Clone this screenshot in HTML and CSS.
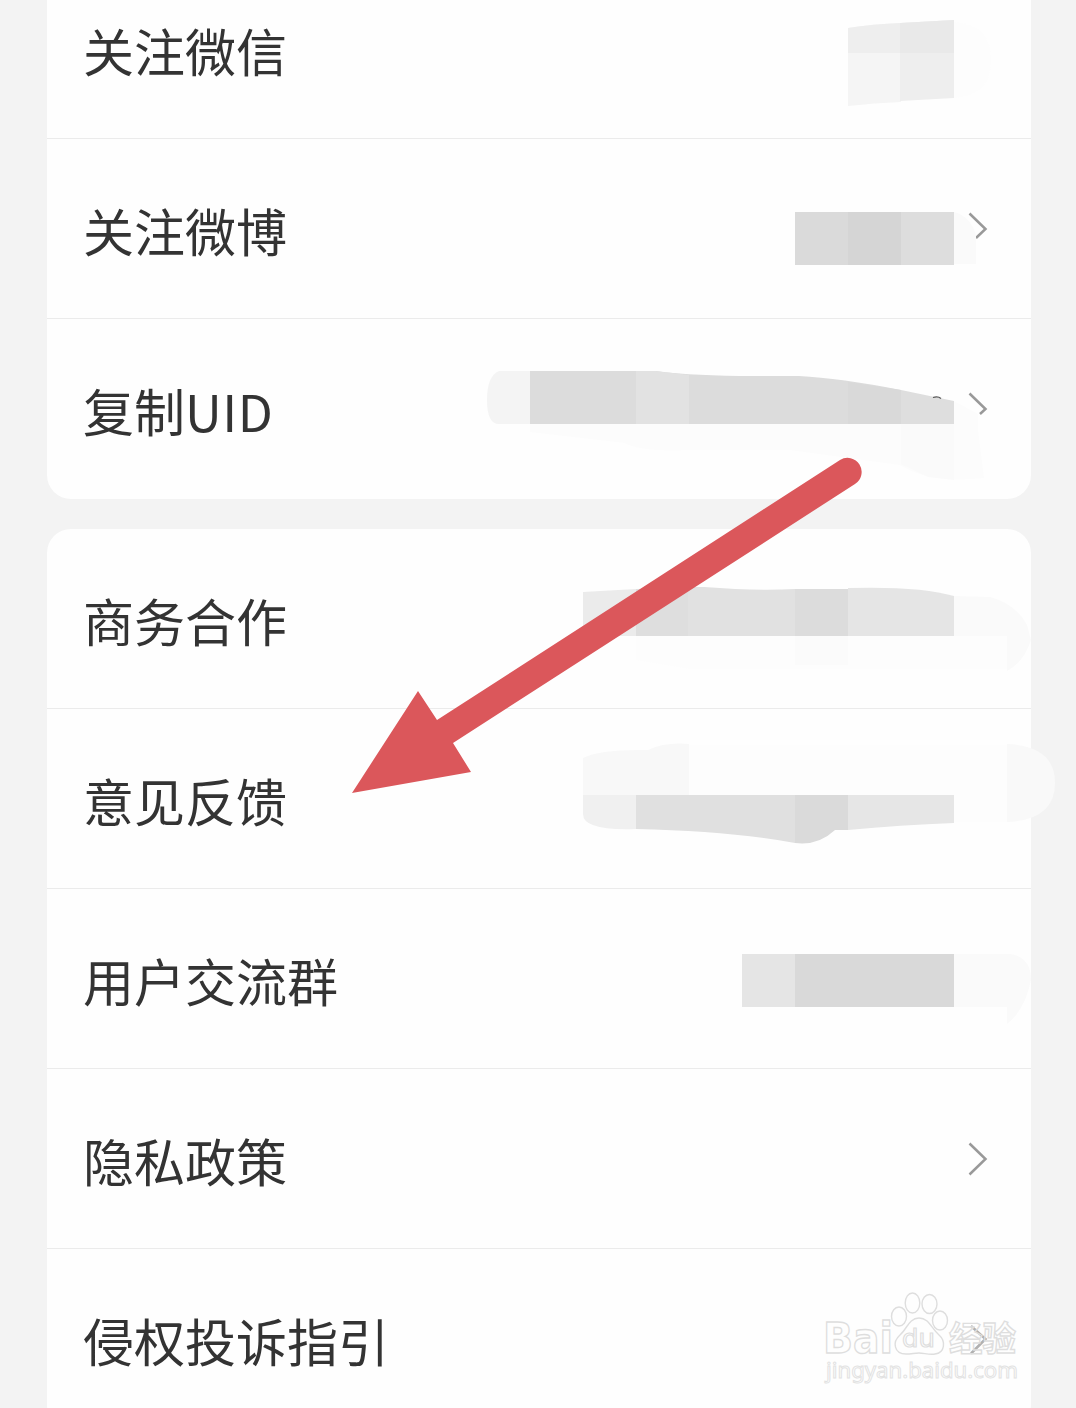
FILE: index.html
```html
<!DOCTYPE html>
<html lang="zh-CN">
<head>
<meta charset="utf-8">
<title>设置</title>
<link rel="stylesheet" href="styles.css">
</head>
<body>
<main class="page">
  <section class="card card-first">
    <div class="row"><span class="label">关注微信</span></div>
    <div class="row"><span class="label">关注微博</span><svg class="chevron" viewBox="0 0 20 34"><path d="M1.500 1.500 17.500 17l-9.500 9"/></svg></div>
    <div class="row"><span class="label">复制<span class="latin">UID</span></span><svg class="chevron" viewBox="0 0 20 34"><path d="M1.500 1.500 17.500 17l-5.500 5"/></svg></div>
  </section>
  <section class="card card-last">
    <div class="row"><span class="label">商务合作</span></div>
    <div class="row"><span class="label">意见反馈</span></div>
    <div class="row"><span class="label">用户交流群</span></div>
    <div class="row"><span class="label">隐私政策</span><svg class="chevron" viewBox="0 0 20 34"><path d="M1.500 1.500 17.500 17 1.500 32.500"/></svg></div>
    <div class="row"><span class="label">侵权投诉指引</span><svg class="chevron chevron-faded" viewBox="0 0 20 34"><path d="M3 4 17.500 17 3 31.500"/></svg></div>
  </section>
</main>
<svg class="overlay" viewBox="0 0 1076 1408">
  <!-- row 1 mask -->
  <path fill="#f5f5f5" d="M848 28Q873 24 901 23V102Q875 103 848 106z"/>
  <path fill="#eeeeee" d="M848 28Q873 24 901 23V53H848z"/>
  <path fill="#eeeeee" d="M900 23 954 20V98L900 101z"/>
  <path fill="#e9e9e9" d="M900 23 954 20V53H900z"/>
  <path fill="#fdfdfd" d="M954 22Q991 25 991 60T954 98z"/>
  <!-- row 2 mask -->
  <path fill="#fafafa" d="M954 212Q970 216 976 235V264H954z"/>
  <path fill="#dadada" d="M795 212H848V265H795z"/>
  <path fill="#d5d5d5" d="M848 212H901V265H848z"/>
  <path fill="#dddddd" d="M901 212H954V265H901z"/>
  <!-- row 3 mask -->
  <path fill="#fcfcfc" d="M530 424H954V401L978 414V430L984 478Q930 484 900 465L790 450H690Q640 452 625 443L530 432z"/>
  <path fill="#fafafa" d="M901 424H954V480L928 477 901 464z"/>
  <path fill="#f4f4f4" d="M530 371H499Q487 376 487 400T499 424H530z"/>
  <path fill="#dcdcdc" d="M530 371H656Q680 375 740 376L799 376Q840 378 901 390V424H530z"/>
  <path fill="#e2e2e2" d="M636 371H656L689 375V424H636z"/>
  <path fill="#d9d9d9" d="M848 382 901 390V424H848z"/>
  <path fill="#dedede" d="M901 390 954 401V424H901z"/>
  <path fill="none" stroke="#555" stroke-width="1.2" d="M933 397.500Q938 396 941 398.500"/>
  <!-- row 4 mask -->
  <path fill="#fdfdfd" d="M636 636H1007V669H690L636 660z"/>
  <path fill="#fbfbfb" d="M795 636H848V665H795z"/>
  <path fill="#fafafa" d="M954 596 990 597Q1016 604 1027 625L1031 640Q1024 662 1007 671V636H954z"/>
  <path fill="#ebebeb" d="M583 592 636 589V636H583z"/>
  <path fill="#dedede" d="M636 589 701 587V636H636z"/>
  <path fill="#e1e1e1" d="M688 587H704Q755 591 795 589V636H688z"/>
  <path fill="#dcdcdc" d="M795 589H848V636H795z"/>
  <path fill="#e5e5e5" d="M848 588Q920 586 954 596V636H848z"/>
  <!-- row 5 mask -->
  <path fill="#fdfdfd" d="M689 745H1007V822H954V795H689z"/>
  <path fill="#f8f8f8" d="M583 758Q600 749 648 750 665 742 689 744V795H583z"/>
  <path fill="#f9f9f9" d="M1007 744Q1055 746 1055 783T1007 822z"/>
  <path fill="#f0f0f0" d="M583 795H636V829Q583 831 583 814z"/>
  <path fill="#e0e0e0" d="M636 795H795V843Q730 831 636 829z"/>
  <path fill="#dadada" d="M795 795H848V830H835Q818 846 795 843z"/>
  <path fill="#e6e6e6" d="M848 795H954V823Q900 825 848 830z"/>
  <!-- row 6 mask -->
  <path fill="#fafafa" d="M954 954H1010Q1031 957 1031 980 1025 1010 1007 1024V1007H954z"/>
  <path fill="#e5e5e5" d="M742 954H795V1007H742z"/>
  <path fill="#d9d9d9" d="M795 954H954V1007H795z"/>
  <!-- pointer arrow -->
  <path class="arrow" d="M352 793 418 691 437 720 840 460A14 14 0 0 1 855 484L453 743 471 772z"/>
  <!-- watermark -->
  <g class="mark">
    <text class="mark-bold" x="823" y="1353" font-size="43" textLength="70" lengthAdjust="spacingAndGlyphs">Bai</text>
    <ellipse cx="899" cy="1316.500" rx="7.500" ry="9.500"/>
    <ellipse cx="912.500" cy="1303" rx="7.300" ry="10"/>
    <ellipse cx="929.500" cy="1304" rx="7.500" ry="9.500"/>
    <ellipse cx="940" cy="1320.500" rx="7.500" ry="9.500"/>
    <path d="M919 1318C909 1318 907 1329 900 1335 892 1342 894 1354 906 1354 912 1354 914 1353 919 1353S929 1355 935 1354C945 1353 946 1341 939 1335 931 1328 929 1318 919 1318z"/>
    <text class="mark-du" x="902" y="1347" font-size="25" textLength="33" lengthAdjust="spacingAndGlyphs">du</text>
    <text class="mark-cjk" x="949" y="1351" font-size="34" textLength="67" lengthAdjust="spacingAndGlyphs">经验</text>
    <text class="mark-url" x="826" y="1378" font-size="22" textLength="192" lengthAdjust="spacingAndGlyphs">jingyan.baidu.com</text>
  </g>
</svg>
</body>
</html>
```
FILE: styles.css
```css
* { box-sizing: border-box; }

body {
  margin: 0;
  background: #f3f3f3;
  color: #333;
  font-family: "Noto Sans CJK SC", sans-serif;
}

.page {
  height: 1408px;
  overflow: hidden;
  padding: 0 45px 0 47px;
  display: flex;
  flex-direction: column;
  gap: 30px;
}

.card {
  flex: none;
  background: #fefefe;
  border-radius: 24px;
}

.card-first {
  margin-top: -41px;
  border-top-left-radius: 0;
  border-top-right-radius: 0;
}

.row {
  height: 180px;
  padding: 0 43px 0 36px;
  display: flex;
  align-items: center;
  justify-content: space-between;
  border-bottom: 1px solid #ebebeb;
}

.row:last-child { border-bottom-color: transparent; }

.label {
  padding-top: 2px;
  font-size: 51px;
  line-height: 76px;
  white-space: nowrap;
}

.latin { letter-spacing: 0.5px; }

.chevron {
  width: 20px;
  height: 34px;
  fill: none;
  stroke: #999;
  stroke-width: 2.5;
}

.chevron-faded { stroke: #b0b0b0; }

.overlay {
  position: absolute;
  top: 0;
  left: 0;
  width: 1076px;
  height: 1408px;
  pointer-events: none;
}

.arrow { fill: #db575b; }

.mark {
  fill: none;
  stroke: #dedede;
  stroke-width: 1.4;
}

.mark-bold { font-family: "DejaVu Sans", sans-serif; font-weight: 700; }
.mark-du { font-family: "DejaVu Sans", sans-serif; stroke-width: 1.2; }
.mark-cjk { font-family: "Noto Sans CJK SC", sans-serif; font-weight: 700; }
.mark-url { font-family: "Noto Sans", sans-serif; fill: #fff; stroke: #e2e2e2; stroke-width: 1; }
```
